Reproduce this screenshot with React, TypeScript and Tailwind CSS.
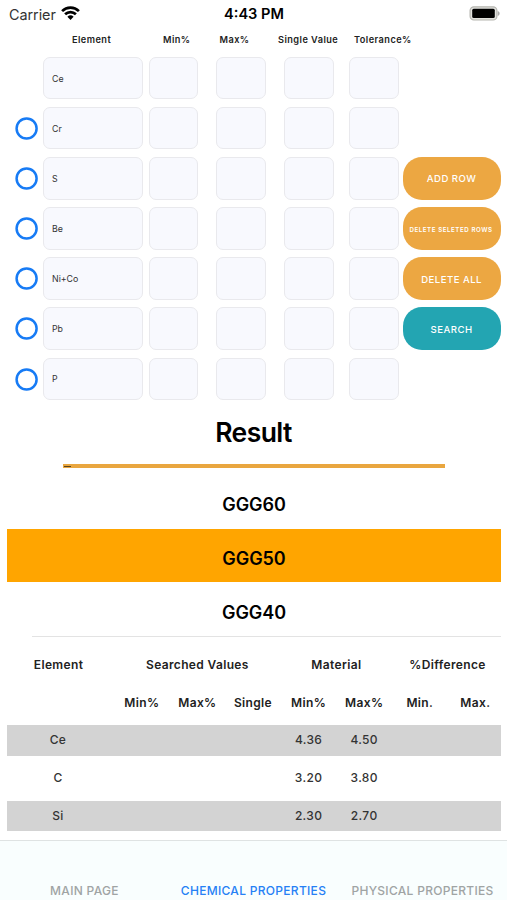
import React from 'react';

const elements = ['Ce', 'Cr', 'S', 'Be', 'Ni+Co', 'Pb', 'P'];

const results = [
  { element: 'Ce', min: '4.36', max: '4.50' },
  { element: 'C', min: '3.20', max: '3.80' },
  { element: 'Si', min: '2.30', max: '2.70' },
];

const tableGrid = 'grid grid-cols-[107px_repeat(7,55.6px)] items-center text-center';

const StatusBar: React.FC = () => (
  <div className="grid h-7 grid-cols-3 items-center pl-[9px] pr-[7px] text-black">
    <div className="flex items-center gap-[6px] text-[14.4px]">
      <span className="pt-px tracking-[-0.05px] text-[#333]">Carrier</span>
      <svg width="19" height="14" viewBox="0 0 19 14" fill="none" stroke="black" strokeWidth="2.7" className="-mt-[2px] -ml-[1px]">
        <path d="M1.1 5.1a12 12 0 0 1 16.8 0" />
        <path d="M4.1 8.3a7.7 7.7 0 0 1 10.8 0" />
        <path d="M9.5 14 6.4 10.8a4.5 4.5 0 0 1 6.2 0Z" fill="black" stroke="none" />
      </svg>
    </div>
    <div className="pt-[2px] pr-px text-center text-[14.6px] font-semibold whitespace-nowrap">4:43 PM</div>
    <div className="flex items-center justify-end pb-[2px]">
      <svg width="31" height="15" viewBox="0 0 31 15">
        <rect x="1.1" y="0.8" width="26.8" height="13.2" rx="3.8" fill="#e2e2de" stroke="#b5b5b0" strokeWidth="1.2" />
        <rect x="3.2" y="2.8" width="22.6" height="9.2" rx="1.5" fill="black" />
        <path d="M28.7 5.1c2.6.8 2.6 4 0 4.8Z" fill="#aaa" />
      </svg>
    </div>
  </div>
);

const Field: React.FC<{ className: string; value?: string }> = ({ className, value }) => (
  <div className={`flex h-[42.4px] shrink-0 items-center rounded-[7px] border border-[#e9e9ed] bg-[#f8f9fe] pl-2 text-[8.8px] text-[#333] ${className}`}>
    {value}
  </div>
);

const ElementRow: React.FC<{ name: string; selectable: boolean }> = ({ name, selectable }) => (
  <div className="flex h-[50.1px] items-start">
    <div className="flex h-[43px] w-[43px] items-center pl-[15px]">
      {selectable && (
        <svg width="23" height="23" viewBox="0 0 23 23" fill="none">
          <circle cx="11.6" cy="11.5" r="10" stroke="#177bf5" strokeWidth="2.5" />
        </svg>
      )}
    </div>
    <Field className="w-[100px]" value={name} />
    <Field className="ml-[5.6px] w-[49.6px]" />
    <Field className="ml-[18.2px] w-[49.6px]" />
    <Field className="ml-[18.4px] w-[49.6px]" />
    <Field className="ml-[15px] w-[50px]" />
  </div>
);

const ActionButton: React.FC<{ className: string; children: string }> = ({ className, children }) => (
  <button className={`mb-[7.1px] flex h-[43px] w-[98px] items-center justify-center rounded-[19px] pt-[2px] whitespace-nowrap text-white ${className}`}>
    {children}
  </button>
);

const SearchForm: React.FC = () => (
  <section>
    <div className="grid h-[29px] grid-cols-[91px_56.5px_58.5px_76px_auto] items-center pl-[72px] pb-[5px] text-[9.2px] font-semibold tracking-[0.45px] text-[#222]">
      <span>Element</span>
      <span>Min%</span>
      <span>Max%</span>
      <span className="whitespace-nowrap">Single Value</span>
      <span>Tolerance%</span>
    </div>
    <div className="flex">
      <div>
        {elements.map((name, i) => (
          <ElementRow key={name} name={name} selectable={i > 0} />
        ))}
      </div>
      <div className="ml-[3.6px] pt-[100.2px]">
        <ActionButton className="bg-[#eca742] text-[9.6px] font-medium tracking-[0.45px]">ADD ROW</ActionButton>
        <ActionButton className="bg-[#eca742] pr-px text-[6.2px] font-semibold tracking-[0.55px]">DELETE SELETED ROWS</ActionButton>
        <ActionButton className="bg-[#eca742] text-[9.6px] font-medium tracking-[0.45px]">DELETE ALL</ActionButton>
        <ActionButton className="bg-[#23a5b2] text-[9.6px] font-medium tracking-[0.45px]">SEARCH</ActionButton>
      </div>
    </div>
  </section>
);

const MaterialList: React.FC = () => (
  <section>
    <h1 className="flex h-[50px] items-center justify-center text-[26.5px] font-semibold tracking-[-0.6px]">Result</h1>
    <div className="mx-auto mt-[6px] h-[4px] w-[382px] bg-[#e9a63f] pt-[2px]">
      <div className="ml-px h-[1.5px] w-[7px] bg-[#5a4420]" />
    </div>
    <div className="mr-[6px] ml-[7px] mt-[9px] text-center text-[18px] font-semibold tracking-[-0.05px]">
      <div className="flex h-[52px] items-center justify-center pt-[3px]">GGG60</div>
      <div className="flex h-[53.7px] items-center justify-center bg-[#ffa500] pt-[6px]">GGG50</div>
      <div className="ml-[25px] flex h-[54.5px] items-center justify-center border-b border-[#e3e3e3] pt-[6px] pr-[25px]">GGG40</div>
    </div>
  </section>
);

const ResultTable: React.FC = () => (
  <section className="mt-[9.2px] mr-[6px] ml-[7px] text-[12px] tracking-[0.35px]">
    <div className={`${tableGrid} h-[37.8px] font-semibold text-[#222]`}>
      <span className="pr-[4px]">Element</span>
      <span className="col-span-3">Searched Values</span>
      <span className="col-span-2">Material</span>
      <span className="col-span-2">%Difference</span>
    </div>
    <div className={`${tableGrid} h-[37.8px] font-semibold text-[#222]`}>
      <span />
      <span>Min%</span>
      <span>Max%</span>
      <span>Single</span>
      <span>Min%</span>
      <span>Max%</span>
      <span>Min.</span>
      <span>Max.</span>
    </div>
    <div className="flex flex-col gap-[7.4px] pt-[3.4px]">
      {results.map((row, i) => (
        <div key={row.element} className={`${tableGrid} h-[30.5px] font-medium text-[#333] ${i % 2 === 0 ? 'bg-[#d3d3d3]' : ''}`}>
          <span className="pr-[5px]">{row.element}</span>
          <span className="col-start-5">{row.min}</span>
          <span>{row.max}</span>
        </div>
      ))}
    </div>
  </section>
);

const TabBar: React.FC = () => (
  <nav className="mt-auto grid h-[60px] shrink-0 grid-cols-3 items-end border-t border-[#dfe3e3] bg-[#f9fefe] text-center text-[12px] font-medium tracking-[0.3px] whitespace-nowrap text-[#a0a4a4]">
    <span>MAIN PAGE</span>
    <span className="text-[#2580f5]">CHEMICAL PROPERTIES</span>
    <span>PHYSICAL PROPERTIES</span>
  </nav>
);

const App: React.FC = () => (
  <div className="flex h-[900px] w-[507px] flex-col overflow-hidden bg-white font-['Inter',sans-serif] text-black">
    <StatusBar />
    <SearchForm />
    <MaterialList />
    <ResultTable />
    <TabBar />
  </div>
);

export default App;
